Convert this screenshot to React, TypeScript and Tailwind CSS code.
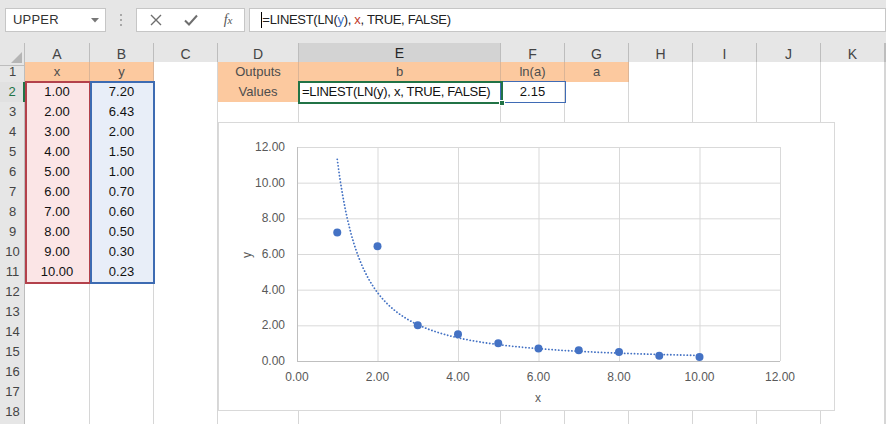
import React from "react";

type Kind = "plain" | "orange" | "pink" | "blue";
type Cell = { t?: string; k?: Kind; left?: boolean; dark?: boolean };

const colWidths = "grid-cols-[25px_65px_64px_64px_81px_202px_64px_64px_64px_64px_64px_64px_1fr]";
const letters = ["A", "B", "C", "D", "E", "F", "G", "H", "I", "J", "K", ""];

const xs = ["1.00", "2.00", "3.00", "4.00", "5.00", "6.00", "7.00", "8.00", "9.00", "10.00"];
const ys = ["7.20", "6.43", "2.00", "1.50", "1.00", "0.70", "0.60", "0.50", "0.30", "0.23"];

function buildRows(): Cell[][] {
  const rows: Cell[][] = [];
  for (let r = 1; r <= 18; r++) {
    const row: Cell[] = [];
    for (let c = 0; c < 12; c++) row.push({ k: "plain" });
    if (r === 1) {
      row[0] = { t: "x", k: "orange" };
      row[1] = { t: "y", k: "orange" };
      row[3] = { t: "Outputs", k: "orange" };
      row[4] = { t: "b", k: "orange" };
      row[5] = { t: "ln(a)", k: "orange" };
      row[6] = { t: "a", k: "orange" };
    }
    if (r >= 2 && r <= 11) {
      row[0] = { t: xs[r - 2], k: "pink", dark: true };
      row[1] = { t: ys[r - 2], k: "blue", dark: true };
    }
    if (r === 2) {
      row[3] = { t: "Values", k: "orange" };
      row[4] = { t: "=LINEST(LN(y), x, TRUE, FALSE)", k: "plain", left: true, dark: true };
      row[5] = { t: "2.15", k: "plain", dark: true };
    }
    rows.push(row);
  }
  return rows;
}

function cellClass(k: Kind | undefined): string {
  if (k === "orange") return "bg-[#fcc99f] border-r border-b border-[#dbb597]";
  if (k === "pink") return "bg-[#fbe5e6] border-r border-b border-[#dad2d3]";
  if (k === "blue") return "bg-[#e8eef8] border-r border-b border-[#d0d7e0]";
  return "bg-white border-r border-b border-[#d6d6d6]";
}

function Chart() {
  const W = 617;
  const H = 289;
  const x0 = 79;
  const y0 = 239;
  const sx = 40.25;
  const sy = 17.833;
  const px = (v: number) => x0 + v * sx;
  const py = (v: number) => y0 - v * sy;
  const ticks = [0, 2, 4, 6, 8, 10, 12];
  const pts = xs.map((x, i) => [parseFloat(x), parseFloat(ys[i])]);
  let d = "";
  for (let x = 1; x <= 10.0001; x += 0.05) {
    const y = 11.31 * Math.pow(x, -1.56);
    d += (d ? " L " : "M ") + px(x).toFixed(2) + " " + py(y).toFixed(2);
  }
  return (
    <svg width={W} height={H} viewBox={`0 0 ${W} ${H}`} className="block">
      <rect x={0.5} y={0.5} width={W - 1} height={H - 1} fill="#ffffff" stroke="#d9d9d9" />
      {ticks.map((t) => (
        <line key={"h" + t} x1={px(0)} x2={px(12)} y1={py(t) + 0.5} y2={py(t) + 0.5} stroke={t === 0 ? "#bfbfbf" : "#d9d9d9"} strokeWidth={1} />
      ))}
      {ticks.map((t) => (
        <line key={"v" + t} x1={px(t) + 0.5} x2={px(t) + 0.5} y1={py(12)} y2={py(0)} stroke={t === 0 ? "#bfbfbf" : "#d9d9d9"} strokeWidth={1} />
      ))}
      {ticks.map((t) => (
        <text key={"yl" + t} x={67} y={py(t) + 4} textAnchor="end" fontSize={12} fill="#595959" fontFamily="'Liberation Sans', Arial, sans-serif">
          {t.toFixed(2)}
        </text>
      ))}
      {ticks.map((t) => (
        <text key={"xl" + t} x={px(t)} y={259} textAnchor="middle" fontSize={12} fill="#595959" fontFamily="'Liberation Sans', Arial, sans-serif">
          {t.toFixed(2)}
        </text>
      ))}
      <text x={320} y={280} textAnchor="middle" fontSize={12} fill="#595959" fontFamily="'Liberation Sans', Arial, sans-serif">
        x
      </text>
      <text x={0} y={0} transform="translate(33 133) rotate(-90)" textAnchor="middle" fontSize={12} fill="#595959" fontFamily="'Liberation Sans', Arial, sans-serif">
        y
      </text>
      <path d={d} fill="none" stroke="#4472c4" strokeWidth={1.8} strokeDasharray="0.1 3.2" strokeLinecap="round" />
      {pts.map(([x, y], i) => (
        <circle key={i} cx={px(x)} cy={py(y)} r={4} fill="#4472c4" />
      ))}
    </svg>
  );
}

export default function App() {
  const rows = buildRows();
  return (
    <div className="w-[886px] h-[424px] overflow-hidden bg-white font-['Liberation_Sans',Arial,sans-serif] text-[13px]">
      {/* Toolbar */}
      <div className="h-[43px] bg-[#e6e6e6] flex items-start pt-[8px] pl-[5px]">
        <div className="w-[101px] h-[24px] bg-white border border-[#c6c6c6] flex items-center justify-between pl-[7px] pr-[6px]">
          <span className="text-[13px] text-[#333333] tracking-[0.2px]">UPPER</span>
          <svg width="8" height="5" viewBox="0 0 8 5">
            <path d="M0 0 L8 0 L4 4.5 Z" fill="#777777" />
          </svg>
        </div>
        <div className="w-[31px] h-[24px] flex flex-col items-center justify-center gap-[3px]">
          <div className="w-[2px] h-[2px] bg-[#a8a8a8]" />
          <div className="w-[2px] h-[2px] bg-[#a8a8a8]" />
          <div className="w-[2px] h-[2px] bg-[#a8a8a8]" />
        </div>
        <div className="w-[109px] h-[24px] bg-white border border-[#c6c6c6] flex items-center">
          <div className="w-[36px] flex justify-center pl-[1px]">
            <svg width="12" height="12" viewBox="0 0 12 12">
              <path d="M1 1 L11 11 M11 1 L1 11" stroke="#6e6e6e" strokeWidth="1.4" fill="none" />
            </svg>
          </div>
          <div className="w-[36px] flex justify-center">
            <svg width="14" height="12" viewBox="0 0 14 12">
              <path d="M1 6.5 L5 10.5 L13 1.5" stroke="#6e6e6e" strokeWidth="2" fill="none" />
            </svg>
          </div>
          <div className="w-[36px] flex justify-center pl-[3px]">
            <span className="font-['Liberation_Serif',serif] italic text-[14px] text-[#555555] leading-none">
              f<span className="text-[11px]">x</span>
            </span>
          </div>
        </div>
        <div className="ml-[4px] w-[640px] h-[24px] bg-white border border-[#c6c6c6] flex items-center pl-[11px]">
          <div className="w-[1px] h-[16px] bg-black" />
          <span className="text-[13px] text-[#222222] tracking-[-0.3px] whitespace-nowrap">
            =LINEST(LN(<span className="text-[#3b6fc4]">y</span>), <span className="text-[#c0392b]">x</span>, TRUE, FALSE)
          </span>
        </div>
      </div>

      {/* Grid */}
      <div className="relative">
        {/* header row */}
        <div className={`grid ${colWidths} h-[19px]`}>
          <div className="bg-[#e6e6e6] border-r border-b border-[#bdbdbd] relative">
            <svg width="11" height="11" viewBox="0 0 11 11" className="absolute right-[2px] bottom-[2px]">
              <path d="M11 0 L11 11 L0 11 Z" fill="#b5b5b5" />
            </svg>
          </div>
          {letters.map((l, i) =>
            l === "E" ? (
              <div key={i} className="bg-[#d3d3d3] border-r border-[#bdbdbd] border-b-2 border-b-[#217346] flex items-center justify-center text-[14px] text-[#262626]">
                {l}
              </div>
            ) : (
              <div key={i} className="bg-[#e6e6e6] border-r border-b border-[#bdbdbd] flex items-center justify-center text-[14px] text-[#444444]">
                {l}
              </div>
            )
          )}
        </div>
        {rows.map((row, ri) => (
          <div key={ri} className={`grid ${colWidths} h-[20px]`}>
            {ri === 1 ? (
              <div className="bg-[#e1e1e1] border-r-2 border-r-[#217346] border-b border-[#c8c8c8] flex items-center justify-center text-[13px] text-[#217346] pl-[1px]">
                {ri + 1}
              </div>
            ) : (
              <div className="bg-[#e6e6e6] border-r border-b border-[#c8c8c8] border-r-[#bdbdbd] flex items-center justify-center text-[13px] text-[#444444] pl-[1px]">
                {ri + 1}
              </div>
            )}
            {row.map((c, ci) => (
              <div
                key={ci}
                className={`${cellClass(c.k)} flex items-center ${c.left ? "justify-start pl-[3px]" : "justify-center"} ${c.dark ? "text-[#111111]" : "text-[#4d4d4d]"} whitespace-nowrap overflow-visible`}
              >
                {c.left ? <span className="tracking-[-0.3px]">{c.t}</span> : c.t}
              </div>
            ))}
          </div>
        ))}
        {/* partial next row (no label visible) */}
        <div className={`grid ${colWidths} h-[4px]`}>
          <div className="bg-[#e6e6e6] border-r border-[#bdbdbd]" />
          {letters.map((l, i) => (
            <div key={i} className="bg-white border-r border-[#d6d6d6]" />
          ))}
        </div>

        {/* range outlines (overlays) */}
        <div className="absolute left-[25px] top-[38px] w-[66px] h-[203px] border-2 border-[#b3414b] pointer-events-none" />
        <div className="absolute left-[90px] top-[38px] w-[65px] h-[203px] border-2 border-[#3d6bb2] pointer-events-none" />
        <div className="absolute left-[500px] top-[38px] w-[66px] h-[22px] border border-[#3f6bb5] pointer-events-none" />
        <div className="absolute left-[298px] top-[38px] w-[205px] h-[23px] border-2 border-[#217346] pointer-events-none" />
        <div className="absolute left-[499px] top-[57px] w-[6px] h-[6px] bg-[#217346] border border-white pointer-events-none" />

        {/* chart */}
        <div className="absolute left-[218px] top-[79px]">
          <Chart />
        </div>
      </div>
    </div>
  );
}
